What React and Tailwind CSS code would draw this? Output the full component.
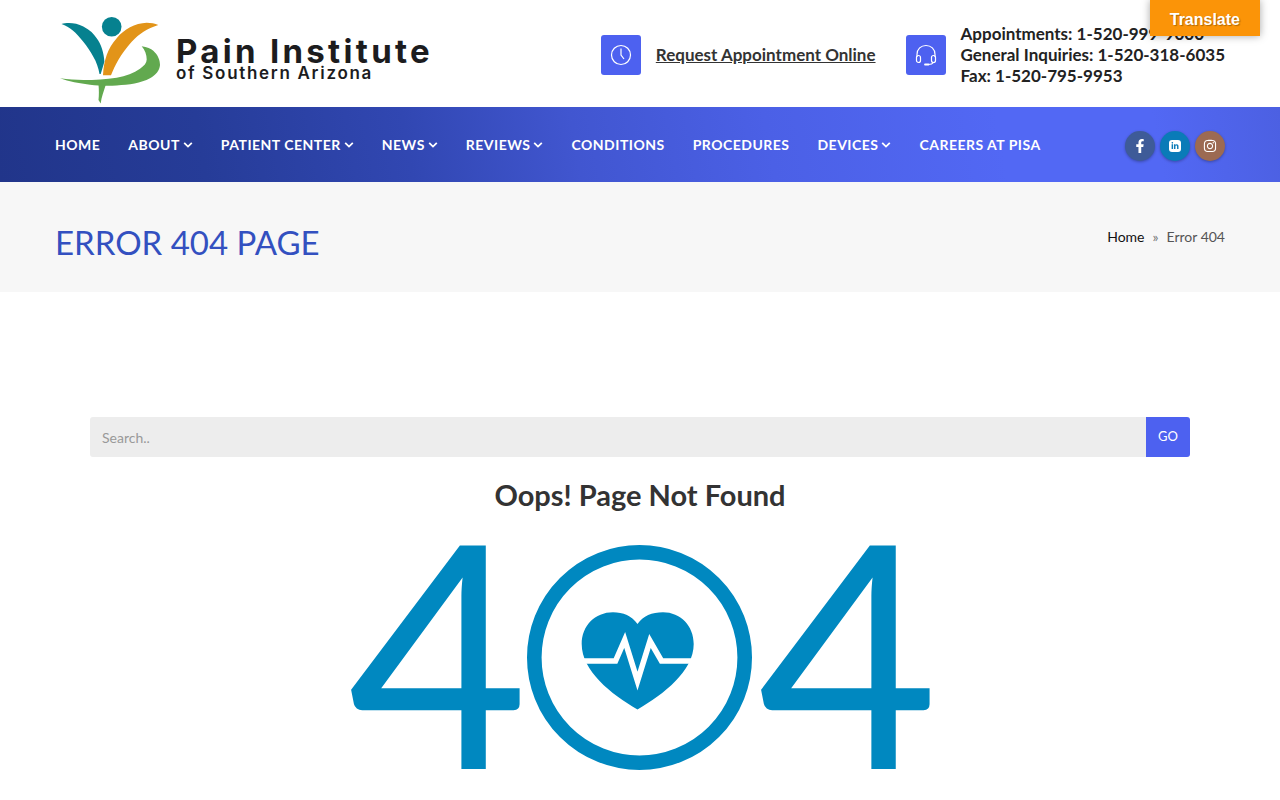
import React from "react";
import { FaFacebookF, FaLinkedinIn, FaInstagram } from "react-icons/fa";

const NAV = [
  { label: "HOME" },
  { label: "ABOUT", menu: true },
  { label: "PATIENT CENTER", menu: true },
  { label: "NEWS", menu: true },
  { label: "REVIEWS", menu: true },
  { label: "CONDITIONS" },
  { label: "PROCEDURES" },
  { label: "DEVICES", menu: true },
  { label: "CAREERS AT PISA" },
];

function LinkedInTile() {
  return (
    <span className="flex size-3 items-center justify-center rounded-[3px] bg-white text-[8px] text-[#0a7bb8]">
      <FaLinkedinIn />
    </span>
  );
}

const SOCIAL = [
  { label: "Facebook", Icon: FaFacebookF, tone: "bg-[#3e5b98]" },
  { label: "LinkedIn", Icon: LinkedInTile, tone: "bg-[#0a7bb8]" },
  { label: "Instagram", Icon: FaInstagram, tone: "bg-[#9c6a52]" },
];

function Logo() {
  return (
    <a href="#" className="flex items-start gap-4 pt-4 pl-1">
      <svg viewBox="0 0 101 89" className="h-[89px] w-[101px]" aria-hidden="true">
        <circle cx="52.7" cy="10.8" r="9.8" fill="#06818f" />
        <path d="M2.500 8C8 6.300 17 6.500 24.300 10.500C31 14 35 18 37.700 22.300C42 28 45 37 45.400 45.700L41.700 58H40.500C39.500 52 37.500 46 34.300 40.700C31.500 35.500 28 30 24.300 25.700C17 16.500 11 11 2.500 8Z" fill="#06818f" />
        <path d="M99.300 9C96 7.500 92 6.800 87.700 6.800C82 7 76 8.500 71 11.300C66 14 61 18 57.700 22.300C53 27.500 50 33 47.700 39C45.500 45 44.300 52 44 59.300H52C54 54 56.500 49 59.300 44C63 37.500 67.500 31.500 72.700 25.700C80 18 88 12.500 99.300 9Z" fill="#e29419" />
        <path d="M82.700 30.200C88 31 92 32.500 94.300 34.700C99 39 101 44 101 49C100.500 54.500 97 59 91 62.300C82 67 70 69 57.700 69.400C48 70 39 69.500 31 68.700C20 67.500 10 65.500 1 62.300C9 63.500 17 64 24.300 64C36 64 47 63.500 57.700 61.700C67 60 75 57 81 52.700C85 50 87.700 47 87.700 43.500C87.700 38.500 86 34 82.700 30.200Z" fill="#62a94f" />
        <path d="M39.500 68.500L46.700 69C44.500 76 42.500 81 41.700 87.500L39.500 84C40 79 40 74 39.500 68.500Z" fill="#62a94f" />
      </svg>
      <span className="flex flex-col pt-5 text-[#1c1c1e]">
        <span className="font-[Inter,sans-serif] text-[33px] leading-[30px] font-bold tracking-widest">
          Pain Institute
        </span>
        <span className="font-[Inter,sans-serif] text-[17px] leading-[14px] font-semibold tracking-widest">
          of Southern Arizona
        </span>
      </span>
    </a>
  );
}

function InfoTile({ children }) {
  return (
    <span className="flex size-10 shrink-0 items-center justify-center rounded-[3px] bg-[#4d61f0] text-white">
      {children}
    </span>
  );
}

function Caret() {
  return (
    <svg viewBox="0 0 10 6" className="ml-[3px] h-[6px] w-[10px]" fill="none" stroke="currentColor" strokeWidth="1.8" aria-hidden="true">
      <path d="M1.200 0.900L5 4.600L8.800 0.900" />
    </svg>
  );
}

function HeartBadge() {
  return (
    <svg viewBox="0 0 225 225" className="-ml-[2px] mr-[6px] size-[225px] shrink-0" role="img" aria-label="Heartbeat">
      <circle cx="112.500" cy="112.500" r="105.200" fill="#fff" stroke="#0088c0" strokeWidth="14.600" />
      <path
        d="M110.500 79C105 71 96 67.300 86 67.300C68 67.300 54.700 81 54.700 99C54.700 126 84 149 110.500 164.500C137 149 166.700 126 166.700 99C166.700 81 153.500 67.300 136 67.300C125 67.300 116 71 110.500 79Z"
        fill="#0088c0"
      />
      <path
        d="M52 116H88.500L97.700 95L110.500 136L123 96L134.500 116H170"
        fill="none"
        stroke="#fff"
        strokeWidth="5.600"
        strokeMiterlimit="10"
      />
    </svg>
  );
}

export default function App() {
  return (
    <div className="relative min-h-screen bg-white font-[Lato,sans-serif] text-[#222]">
      <button
        type="button"
        className="absolute top-0 right-5 z-10 h-9 bg-[#fb9408] px-5 pt-[3px] font-['Liberation_Sans',sans-serif] text-base font-bold text-white shadow-[0_0_8px_rgba(0,0,0,0.35)] [text-shadow:1px_1px_1px_rgba(0,0,0,0.3)]"
      >
        Translate
      </button>

      <header>
        <div className="mx-auto flex h-[107px] max-w-[1170px] items-start justify-between">
          <Logo />
          <div className="flex items-center gap-[30px] pt-[23px]">
            <div className="flex items-center gap-[15px]">
              <InfoTile>
                <svg viewBox="0 0 22 22" className="size-[22px]" fill="none" stroke="currentColor" strokeWidth="1.200" aria-hidden="true">
                  <circle cx="11" cy="11" r="9.500" />
                  <path d="M11 4.500V11L14 15" />
                </svg>
              </InfoTile>
              <a href="#" className="text-[17px] leading-[21px] font-bold text-[#333] underline">
                Request Appointment Online
              </a>
            </div>
            <div className="flex items-center gap-[15px]">
              <InfoTile>
                <svg viewBox="0 0 22 22" className="size-[22px]" fill="none" stroke="currentColor" strokeWidth="1.200" aria-hidden="true">
                  <path d="M2 13V10.500C2 5 6 1.500 11 1.500S20 5 20 10.500V13" />
                  <rect x="1.500" y="11.500" width="4" height="7" rx="2" />
                  <rect x="16.500" y="11.500" width="4" height="7" rx="2" />
                  <path d="M18.500 18.500C17.500 20 15.500 20.500 13.500 20.500" />
                  <path d="M10 20.500H13.500" strokeWidth="1.800" strokeLinecap="round" />
                </svg>
              </InfoTile>
              <p className="text-[17px] leading-[21px] font-bold">
                Appointments: 1-520-999-9000
                <br />
                General Inquiries: 1-520-318-6035
                <br />
                Fax: 1-520-795-9953
              </p>
            </div>
          </div>
        </div>

        <div className="bg-[linear-gradient(80deg,#21358a_0%,#263c98_16%,#3147b2_32%,#4156d0_45%,#4b60e6_60%,#5268f4_78%,#5268f4_90%,#4c60e2_100%)]">
          <div className="mx-auto flex h-[75px] max-w-[1170px] items-center justify-between">
            <nav aria-label="Main">
              <ul className="flex items-center gap-7">
                {NAV.map(({ label, menu }) => (
                  <li key={label}>
                    <a href="#" className="flex items-center text-sm font-bold tracking-[0.035em] text-white">
                      {label}
                      {menu && <Caret />}
                    </a>
                  </li>
                ))}
              </ul>
            </nav>
            <ul className="flex gap-[5px] pt-[3px]">
              {SOCIAL.map(({ label, Icon, tone }) => (
                <li key={label}>
                  <a
                    href="#"
                    aria-label={label}
                    className={`flex size-[30px] items-center justify-center rounded-full text-sm text-white shadow-[0_1px_3px_rgba(0,0,0,0.3)] ${tone}`}
                  >
                    <Icon />
                  </a>
                </li>
              ))}
            </ul>
          </div>
        </div>
      </header>

      <section className="bg-[#f7f7f7]">
        <div className="mx-auto flex h-[110px] max-w-[1170px] items-center justify-between">
          <h1 className="pt-[10px] text-[33px] leading-10 text-[#3350c0]">ERROR 404 PAGE</h1>
          <nav aria-label="Breadcrumb" className="flex gap-2 text-sm">
            <a href="#" className="text-[#111]">Home</a>
            <span className="text-[#777]">»</span>
            <span className="text-[#555]">Error 404</span>
          </nav>
        </div>
      </section>

      <main className="mx-auto max-w-[1100px] pt-[125px]">
        <form className="flex h-10" onSubmit={(e) => e.preventDefault()}>
          <input
            type="search"
            aria-label="Search"
            placeholder="Search.."
            className="min-w-0 flex-1 rounded-l-[3px] bg-[#ededed] px-3 pt-[2px] text-sm outline-none placeholder:text-[#999]"
          />
          <button type="submit" className="w-11 rounded-r-[3px] bg-[#4d61f0] text-[13px] text-white">
            GO
          </button>
        </form>
        <h2 className="mt-5 text-center text-[29px] leading-9 font-bold text-[#333]">Oops! Page Not Found</h2>
        <div className="mt-8 flex h-[225px] items-start justify-center pl-[6px] text-[312px] leading-[207px] text-[#0088c0]">
          <span>4</span>
          <HeartBadge />
          <span>4</span>
        </div>
      </main>
    </div>
  );
}
